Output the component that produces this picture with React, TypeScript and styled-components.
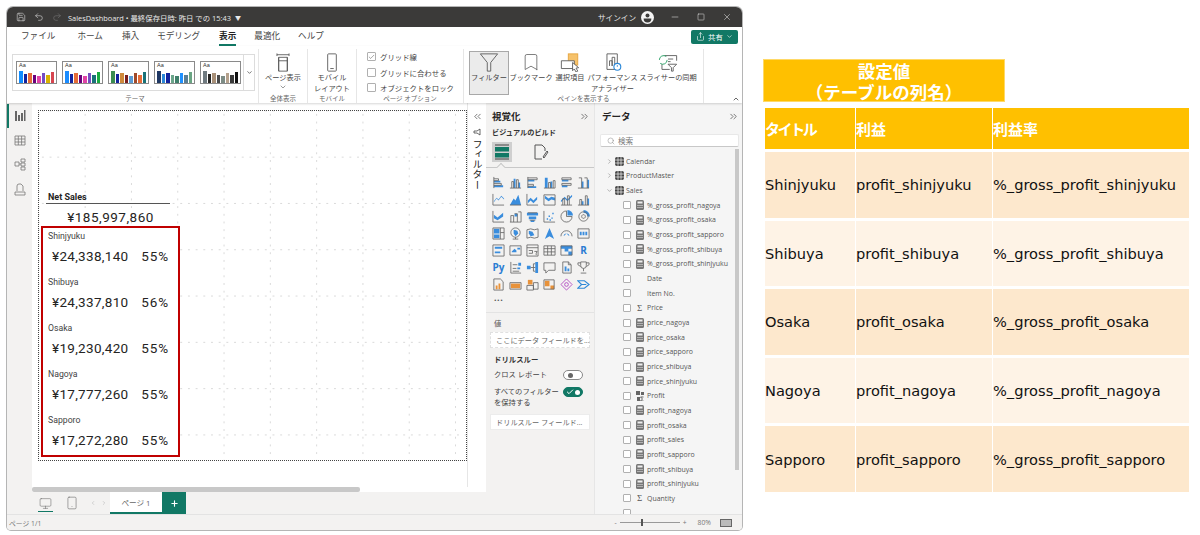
import React from 'react'
import styled, { createGlobalStyle } from 'styled-components'
import {
  Save,
  Undo2,
  Redo2,
  Minus,
  Square,
  X,
  ChevronDown,
  ChevronRight,
  ChevronUp,
  ChevronLeft,
  ChevronsLeft,
  ChevronsRight,
  Search,
  Monitor,
  Smartphone,
  Plus,
  Bookmark,
  Check,
  Share
} from 'lucide-react'

const UI_FONT = `'Open Sans', 'Noto Sans CJK JP', sans-serif`
const GREEN = '#117865'

const GlobalStyle = createGlobalStyle`
  html, body { margin: 0; padding: 0; background: #fff; }
  #root { width: 1200px; height: 535px; overflow: hidden; }
`

const Page = styled.div`
  display: flex;
  width: 1200px;
  height: 535px;
  font-family: ${UI_FONT};
  color: #333;
`

const Window = styled.div`
  width: 735px;
  height: 523px;
  margin: 7px 0 0 7px;
  display: flex;
  flex-direction: column;
  border-radius: 6px 6px 4px 4px;
  box-shadow: 0 0 0 1px #b5b5b5;
  overflow: hidden;
  background: #fff;
`

const TitleBar = styled.div`
  height: 20px;
  flex: none;
  background: #3b3a39;
  display: flex;
  align-items: center;
  padding: 0 9px;
  color: #e8e8e8;
  font-size: 7.4px;
`

const TitleIcons = styled.div`
  display: flex;
  align-items: center;
  gap: 8px;
  margin-right: 6px;
`

const TitleText = styled.span`
  white-space: nowrap;
`

const TitleCaret = styled.span`
  margin-left: 4px;
  font-size: 6px;
`

const SignIn = styled.div`
  margin-left: auto;
  display: flex;
  align-items: center;
  gap: 5px;
  font-size: 7.6px;
`

const Avatar = styled.svg`
  width: 13px;
  height: 13px;
`

const WinButtons = styled.div`
  display: flex;
  align-items: center;
  gap: 17px;
  margin: 0 1px 0 16px;
`

const TabRow = styled.div`
  height: 19px;
  flex: none;
  display: flex;
  align-items: center;
  padding: 0 4px 0 14px;
  background: #fff;
`

const Tab = styled.div<{ $active?: boolean; $gap: number }>`
  position: relative;
  margin-right: ${(p) => p.$gap}px;
  font-size: 8.6px;
  font-weight: ${(p) => (p.$active ? 700 : 400)};
  color: ${(p) => (p.$active ? '#222' : '#444')};
  white-space: nowrap;
  line-height: 19px;

  ${(p) =>
    p.$active &&
    `&::after {
      content: '';
      position: absolute;
      left: 0;
      right: 0;
      bottom: 0;
      height: 2px;
      background: ${GREEN};
    }`}
`

const ShareButton = styled.div`
  margin-left: auto;
  width: 47px;
  height: 14px;
  border-radius: 2px;
  background: ${GREEN};
  color: #fff;
  font-size: 7.4px;
  display: flex;
  align-items: center;
  justify-content: center;
  gap: 3px;
`

const Ribbon = styled.div`
  height: 57px;
  flex: none;
  display: flex;
  background: #fff;
  padding-left: 5px;
  position: relative;
  box-shadow: 0 1px 2px rgba(0, 0, 0, 0.16);
  z-index: 2;
`

const RibbonGroup = styled.div<{ $w: number; $sep?: boolean }>`
  width: ${(p) => p.$w}px;
  flex: none;
  box-sizing: border-box;
  display: flex;
  flex-direction: column;
  border-right: ${(p) => (p.$sep === false ? 'none' : '1px solid #e6e6e6')};
  margin: 3px 0 0;
`

const GroupBody = styled.div`
  flex: 1;
  display: flex;
  min-height: 0;
`

const GroupLabel = styled.div`
  height: 9px;
  font-size: 6.5px;
  line-height: 9px;
  color: #666;
  text-align: center;
  white-space: nowrap;
`

const ThemeBox = styled.div`
  width: 243px;
  height: 37px;
  margin-top: 5px;
  border: 1px solid #dcdcdc;
  box-sizing: border-box;
  display: flex;
  align-items: center;
  padding-left: 3px;
`

const ThemeList = styled.div`
  display: flex;
  gap: 5px;
  flex: 1;
`

const Thumb = styled.div`
  width: 41px;
  height: 23px;
  box-sizing: border-box;
  border: 1px solid #8a8a8a;
  background: #fff;
  padding: 0 2px;
  display: flex;
  flex-direction: column;
`

const ThumbLabel = styled.div`
  font-family: 'Liberation Sans', sans-serif;
  font-size: 5.5px;
  line-height: 6px;
  color: #333;
`

const ThumbBars = styled.div`
  flex: 1;
  display: flex;
  align-items: flex-end;
  gap: 1px;
`

const ThumbBar = styled.div<{ $h: number; $c: string }>`
  flex: 1;
  height: ${(p) => p.$h}px;
  background: ${(p) => p.$c};
`

const ThemeMore = styled.div`
  width: 10px;
  height: 100%;
  border-left: 1px solid #dcdcdc;
  display: flex;
  align-items: center;
  justify-content: center;
  color: #444;
`

const LargeButtonRow = styled.div`
  display: flex;
  padding-left: 5px;
`

const LargeButton = styled.div<{ $w: number; $on?: boolean }>`
  width: ${(p) => p.$w}px;
  flex: none;
  box-sizing: border-box;
  margin-top: 2px;
  height: 44px;
  display: flex;
  flex-direction: column;
  align-items: center;
  font-size: 7.2px;
  line-height: 11px;
  color: #444;
  text-align: center;
  white-space: nowrap;
  background: ${(p) => (p.$on ? '#ebebeb' : 'transparent')};
  border: 1px solid ${(p) => (p.$on ? '#a8a8a8' : 'transparent')};
`

const LargeIcon = styled.svg`
  width: 22px;
  height: 19px;
  margin: 1px 0 0;
  flex: none;
`

const OptionList = styled.div`
  display: flex;
  flex-direction: column;
  gap: 3.5px;
  padding: 1.5px 0 0 10px;
`

const OptionRow = styled.div`
  display: flex;
  align-items: center;
  gap: 4px;
  height: 12px;
  font-size: 7.4px;
  white-space: nowrap;
  color: #444;
`

const Box = styled.div<{ $size?: number }>`
  width: ${(p) => p.$size ?? 9}px;
  height: ${(p) => p.$size ?? 9}px;
  flex: none;
  box-sizing: border-box;
  border: 1px solid #b0b0b0;
  border-radius: 1px;
  background: #fff;
  display: flex;
  align-items: center;
  justify-content: center;
`

const CollapseRibbon = styled.div`
  position: absolute;
  right: 2px;
  bottom: 0;
  color: #333;
  line-height: 0;
`

const Main = styled.div`
  flex: 1;
  min-height: 0;
  display: flex;
`

const LeftNav = styled.div`
  width: 25px;
  flex: none;
  background: #f3f2f1;
  display: flex;
  flex-direction: column;
  align-items: center;
  gap: 11.5px;
  padding-top: 6px;
  position: relative;

  &::before {
    content: '';
    position: absolute;
    left: 0;
    top: 1px;
    width: 2px;
    height: 24px;
    background: ${GREEN};
  }
`

const NavIcon = styled.svg`
  width: 12px;
  height: 13px;
`

const CanvasColumn = styled.div`
  width: 454px;
  flex: none;
  display: flex;
  flex-direction: column;
`

const CanvasRow = styled.div`
  flex: 1;
  min-height: 0;
  display: flex;
`

const CanvasArea = styled.div`
  width: 435px;
  flex: none;
  background: #fff;
  padding: 7px 0 0 6px;
  box-sizing: border-box;
  position: relative;
`

const ReportPage = styled.div`
  width: 429px;
  height: 351px;
  box-sizing: border-box;
  border: 1.5px dotted #444;
  display: flex;
  flex-direction: column;
  justify-content: flex-end;
  padding: 0 0 3px 2px;
  background-color: #fff;
  background-image: radial-gradient(circle, #d4d4d4 0.45px, transparent 0.7px),
    radial-gradient(circle, #d4d4d4 0.45px, transparent 0.7px);
  background-size: 46.3px 7.7px, 7.7px 46.3px;
  background-position: 23px 0, 0 23px;
`

const NetSales = styled.div`
  width: 124px;
  margin: 0 0 -1px 5px;
`

const NetTitle = styled.div`
  font-family: 'Roboto', sans-serif;
  font-weight: 700;
  font-size: 9px;
  line-height: 12px;
  padding-left: 2px;
  color: #252423;
  border-bottom: 1px solid #555;
`

const NetValue = styled.div`
  font-family: 'Roboto', sans-serif;
  font-size: 13.5px;
  letter-spacing: 0.5px;
  line-height: 20px;
  margin-top: 3px;
  padding-left: 5px;
  text-align: center;
  color: #252423;
`

const RedFrame = styled.div`
  width: 139px;
  height: 231px;
  box-sizing: border-box;
  border: 2px solid #c00000;
  padding: 2px 0 0 5px;
  display: flex;
  flex-direction: column;
  background: #fff;
`

const StoreCard = styled.div`
  height: 46px;
  flex: none;
`

const StoreName = styled.div`
  font-family: 'Roboto', sans-serif;
  font-size: 8.7px;
  line-height: 12px;
  color: #444;
`

const StoreValues = styled.div`
  display: flex;
  align-items: center;
  width: 117px;
  padding-left: 4px;
  margin-top: 6px;
  font-family: 'Roboto', sans-serif;
  font-size: 13.5px;
  letter-spacing: 0.3px;
  line-height: 17px;
  color: #252423;
`

const Percent = styled.span`
  margin-left: auto;
  letter-spacing: 0.9px;
`

const FilterPane = styled.div`
  width: 19px;
  flex: none;
  background: #fff;
  border-left: 1px solid #e6e6e6;
  box-sizing: border-box;
  display: flex;
  flex-direction: column;
  align-items: center;
  padding-top: 8px;
  color: #333;
`

const FilterFunnel = styled.svg`
  width: 8px;
  height: 8px;
  margin: 6px 0 3px;
`

const VerticalLabel = styled.div`
  writing-mode: vertical-rl;
  font-size: 10px;
  line-height: 12px;
  letter-spacing: 0.2px;
  color: #222;
`

const ScrollRow = styled.div`
  height: 5px;
  flex: none;
  background: #fff;
`

const ScrollThumb = styled.div`
  width: 328px;
  height: 5px;
  border-radius: 2px;
  background: #c8c8c8;
`

const PageTabs = styled.div`
  height: 22px;
  flex: none;
  background: #f3f2f1;
  display: flex;
  align-items: stretch;
`

const DeviceTab = styled.div<{ $active?: boolean; $w: number }>`
  width: ${(p) => p.$w}px;
  flex: none;
  display: flex;
  align-items: center;
  justify-content: center;
  position: relative;
  color: #666;

  ${(p) =>
    p.$active &&
    `&::after {
      content: '';
      position: absolute;
      left: 6px;
      right: 5px;
      bottom: 2px;
      height: 1.5px;
      background: ${GREEN};
    }`}
`

const PagerArrows = styled.div`
  width: 24px;
  display: flex;
  align-items: center;
  justify-content: center;
  gap: 5px;
  color: #bbb;
`

const PageTab = styled.div`
  width: 52px;
  box-sizing: border-box;
  background: #fff;
  border-bottom: 2px solid ${GREEN};
  font-size: 7.6px;
  color: #666;
  display: flex;
  align-items: center;
  justify-content: center;
`

const AddTab = styled.div`
  width: 24px;
  background: ${GREEN};
  color: #fff;
  display: flex;
  align-items: center;
  justify-content: center;
`

const VizPane = styled.div`
  width: 109px;
  flex: none;
  box-sizing: border-box;
  background: #f3f2f1;
  border-right: 1px solid #e6e6e6;
  display: flex;
  flex-direction: column;
  padding: 7px 4px 0 4px;
`

const PaneHeader = styled.div`
  display: flex;
  align-items: center;
  justify-content: space-between;
  height: 12px;
  padding-left: 2px;
  font-size: 9.5px;
  font-weight: 700;
  color: #252423;
`

const SubHeader = styled.div`
  font-size: 7.2px;
  font-weight: 700;
  line-height: 10px;
  margin: 5px 0 4px 2px;
  color: #333;
`

const BuildTabs = styled.div`
  display: flex;
  align-items: center;
  padding-left: 2px;
  gap: 19px;
  height: 21px;
`

const BuildTab = styled.div<{ $on?: boolean }>`
  width: 20px;
  height: 20px;
  display: flex;
  align-items: center;
  justify-content: center;
  background: ${(p) => (p.$on ? '#cfcfcf' : 'transparent')};
`

const BuildIcon = styled.svg`
  width: 16px;
  height: 16px;
`

const NotchRule = styled.div`
  height: 1px;
  background: #c8c8c8;
  margin: 5px -4px 0 -4px;
  position: relative;

  &::after {
    content: '';
    position: absolute;
    left: 12px;
    top: -3px;
    width: 5px;
    height: 5px;
    background: #f3f2f1;
    border-left: 1px solid #c8c8c8;
    border-top: 1px solid #c8c8c8;
    transform: rotate(45deg);
  }
`

const VizGrid = styled.div`
  display: grid;
  grid-template-columns: repeat(6, 17px);
  grid-auto-rows: 17px;
  margin: 6px 0 0 0;
  justify-items: center;
  align-items: center;
`

const VizGlyph = styled.svg`
  width: 13px;
  height: 13px;
`

const VizText = styled.span<{ $c: string; $s: number }>`
  font-family: 'Open Sans', sans-serif;
  font-weight: 700;
  font-size: ${(p) => p.$s}px;
  line-height: 13px;
  color: ${(p) => p.$c};
`

const MoreDots = styled.div`
  margin: 2px 0 0 4px;
  height: 13px;
  font-size: 9px;
  line-height: 9px;
  font-weight: 700;
  letter-spacing: 0.5px;
  color: #555;
`

const PaneRule = styled.div`
  height: 1px;
  background: #e3e3e3;
  margin: 4px -4px 0;
`

const FieldLabel = styled.div`
  font-size: 7.3px;
  line-height: 12px;
  margin: 4px 0 3px 4px;
  color: #555;
`

const WellBox = styled.div<{ $dashed?: boolean }>`
  height: 16px;
  box-sizing: border-box;
  background: #fff;
  border: 1px ${(p) => (p.$dashed ? 'dashed #e0e0e0' : 'solid #ececec')};
  font-size: 7.2px;
  line-height: 14px;
  padding-left: 5px;
  color: #666;
  white-space: nowrap;
  overflow: visible;
`

const DrillTitle = styled.div`
  font-size: 7.4px;
  font-weight: 700;
  line-height: 12px;
  margin: 5px 0 4px 4px;
  color: #333;
`

const ToggleRow = styled.div`
  display: flex;
  align-items: flex-start;
  justify-content: space-between;
  padding: 0 7px 0 4px;
  font-size: 7.3px;
  line-height: 11px;
  margin-bottom: 6px;
  color: #444;
`

const ToggleText = styled.div`
  width: 68px;
`

const Toggle = styled.div<{ $on?: boolean }>`
  width: 20px;
  height: 10px;
  margin-top: 1px;
  flex: none;
  box-sizing: border-box;
  border-radius: 5px;
  border: 1px solid ${(p) => (p.$on ? GREEN : '#888')};
  background: ${(p) => (p.$on ? GREEN : '#fff')};
  display: flex;
  align-items: center;
  justify-content: ${(p) => (p.$on ? 'flex-end' : 'flex-start')};
  padding: 0 2px;
  color: #fff;
  position: relative;
`

const Knob = styled.div<{ $on?: boolean }>`
  width: 5px;
  height: 5px;
  border-radius: 50%;
  background: ${(p) => (p.$on ? '#fff' : '#666')};
  margin-left: ${(p) => (p.$on ? 0 : 2)}px;
`

const ToggleCheck = styled.div`
  position: absolute;
  left: 2px;
  top: 0;
  line-height: 0;
`

const DataPane = styled.div`
  flex: 1;
  min-width: 0;
  background: #f5f5f5;
  display: flex;
  flex-direction: column;
  padding: 7px 3px 0 5px;
  position: relative;
  overflow: hidden;
`

const SearchBox = styled.div`
  height: 14px;
  width: 139px;
  margin-top: 12px;
  box-sizing: border-box;
  background: #fff;
  border: 1px solid #e8e8e8;
  border-bottom-color: #c8c8c8;
  border-radius: 2px;
  display: flex;
  align-items: center;
  gap: 3px;
  padding-left: 6px;
  font-size: 7.6px;
  color: #777;
`

const TreeList = styled.div`
  margin-top: 7px;
  display: flex;
  flex-direction: column;
`

const TreeRow = styled.div<{ $indent?: boolean }>`
  height: 14.67px;
  flex: none;
  display: flex;
  align-items: center;
  padding-left: ${(p) => (p.$indent ? 23 : 6)}px;
  font-size: 6.95px;
  color: #555;
  white-space: nowrap;
`

const TreeChevron = styled.div`
  width: 7px;
  margin-right: 1px;
  display: flex;
  color: #666;
`

const TreeTable = styled.svg`
  width: 9px;
  height: 9px;
  margin: 0 2px 0 1px;
  flex: none;
`

const FieldIconSlot = styled.div`
  width: 9px;
  height: 10px;
  margin: 0 3px 0 4px;
  flex: none;
  display: flex;
  align-items: center;
  justify-content: center;
  color: #555;
  font-size: 9px;
  font-family: 'Liberation Serif', serif;
`

const FieldIcon = styled.svg`
  width: 8px;
  height: 10px;
`

const DataScroll = styled.div`
  position: absolute;
  right: 3px;
  top: 46px;
  width: 4px;
  height: 321px;
  background: #c8c8c8;
`

const StatusBar = styled.div`
  height: 16px;
  flex: none;
  box-sizing: border-box;
  background: #f3f2f1;
  border-top: 1px solid #e3e3e3;
  display: flex;
  align-items: center;
  padding: 0 10px 0 2px;
  font-size: 6.8px;
  color: #777;
`

const ZoomSlider = styled.div`
  margin-left: auto;
  display: flex;
  align-items: center;
  gap: 3px;
`

const ZoomTrack = styled.div`
  width: 60px;
  height: 1px;
  background: #999;
  position: relative;

  &::before {
    content: '';
    position: absolute;
    left: 21px;
    top: -3px;
    width: 2px;
    height: 7px;
    background: #555;
  }
`

const ZoomValue = styled.span`
  margin: 0 9px 0 11px;
`

const FitIcon = styled.div`
  width: 10px;
  height: 6px;
  border: 1px solid #666;
  background: #bbb;
`

const SidePanel = styled.div`
  margin: 59px 0 0 21px;
  width: 426px;
  display: flex;
  flex-direction: column;
  align-items: flex-start;
`

const SettingTitle = styled.div`
  width: 242px;
  height: 43px;
  box-sizing: border-box;
  background: #ffc000;
  border: 1px solid #ffd966;
  color: #fff;
  font-family: 'Noto Sans CJK JP', sans-serif;
  font-weight: 700;
  font-size: 17.5px;
  line-height: 21px;
  text-align: center;
  white-space: nowrap;
`

const ConfigTable = styled.div`
  margin: 6px 0 0 2px;
  width: 424px;
  display: grid;
  grid-template-columns: 90px 136px 196px;
  grid-template-rows: 41px repeat(5, 65.6px);
  column-gap: 1px;
  row-gap: 3px;
`

const HeadCell = styled.div<{ $tight?: boolean }>`
  background: #ffc000;
  color: #fff;
  font-family: 'Noto Sans CJK JP', sans-serif;
  font-weight: 700;
  font-size: 15px;
  letter-spacing: ${(p) => (p.$tight ? '-2.4px' : '0')};
  display: flex;
  align-items: center;
`

const BodyCell = styled.div<{ $alt: boolean }>`
  background: ${(p) => (p.$alt ? '#fef3e6' : '#fde8cd')};
  color: #111;
  font-family: 'DejaVu Sans', sans-serif;
  font-size: 14.6px;
  display: flex;
  align-items: center;
  white-space: nowrap;
`

const THEMES = [
  ['#118dff', '#12239e', '#e66c37', '#6b007b', '#e044a7', '#744ec2', '#d9b300', '#d64550'],
  ['#1a8cff', '#12239e', '#e66c37', '#6b007b', '#e044a7', '#744ec2', '#197278', '#1aab40'],
  ['#3a8c50', '#12239e', '#d08a3c', '#7a1f1f', '#5b9bd5', '#a14a2a', '#e66c37', '#197278'],
  ['#1f3864', '#2b88d8', '#12239e', '#6ba58a', '#3f7f6a', '#1e90ff', '#5b7f95', '#6aa583'],
  ['#6f7a80', '#252423', '#a89078', '#4a4a4a', '#7d8c85', '#b5a18c', '#3a3a3a', '#111111']
]
const BAR_HEIGHTS = [12, 9, 10, 8, 7, 10, 8, 11]

const VIZ_ICONS: { g: string; b: string }[] = [
  { g: 'M2 1v12M2 3h5v2H2M2 8h8v2H2', b: 'M2 5h7v2H2zM2 10h10v2H2z' },
  { g: 'M1 13h12M3 13V6h2v7M8 13V4h2v9', b: 'M5 13V3h2v10zM10 13V7h2v6z' },
  { g: 'M2 1v12M2 2h10v2H2M2 9h6v2H2', b: 'M2 4h7v2H2zM2 11h9v2H2z' },
  { g: 'M1 13h12M6 13V7h2v6M11 13V5h2v8', b: 'M2 13V2h3v11zM8 13V6h2v7z' },
  { g: 'M2 2h10v2H2zM2 8h10v2H2z', b: 'M2 4h7v2H2zM2 10h6v2H2z' },
  { g: 'M1 13h12M2 2h3v11M8 2h3v11', b: 'M5 6h2v7H5zM11 4h2v9h-2z' },
  { g: 'M1 1v12h12', b: 'M2 9l3-4 2 2 3-4 3 3v1l-3-3-3 4-2-2-3 4z' },
  { g: 'M1 13h12', b: 'M1 13l4-7 2 2 3-6 3 11z' },
  { g: 'M1 1v12h12', b: 'M2 8l3-3 3 3 4-4v3l-4 4-3-3-3 3z' },
  { g: 'M1 2h12v11H1z', b: 'M2 3l4 3 3-2 4 1v3L9 7 6 9 2 6z' },
  { g: 'M1 13h12M3 13V6h2v7M8 13V3h2v10', b: 'M1 8l4-4 3 3 5-5v2L8 9 5 6 1 10z' },
  { g: 'M1 13h12M3 13V7h2v6M9 13V3h2v10', b: 'M5 13V9h2v4zM11 13V6h2v7z' },
  { g: 'M1 1v12h12', b: 'M2 5l4 3 6-5v4l-6 4-4-2z' },
  { g: 'M1 13h12M2 13V6h3v7M6 4h3v9M10 2h3v11', b: 'M6 4h3v3H6z' },
  { g: 'M2 3h10M4 11h6', b: 'M1 3h12v3H1zM3 7h8v3H3zM5 11h4v2H5z' },
  { g: 'M1 1v12h12', b: 'M4 9h1.5v1.5H4zM6 6h1.5v1.5H6zM9 8h1.5v1.5H9zM10 3h1.5v1.5H10zM7 10h1.5v1.5H7z' },
  { g: 'M7 1a6 6 0 1 0 6 6H7z', b: 'M8 0a6 6 0 0 1 6 6H8z' },
  { g: 'M7 2a5 5 0 1 0 .01 0M7 5a2 2 0 1 0 .01 0', b: 'M7 0a7 7 0 0 1 7 7h-3a4 4 0 0 0-4-4z' },
  { g: 'M1 1h12v12H1zM9 1v12M9 6h4', b: 'M2 2h6v5H2zM2 8h6v4H2z' },
  { g: 'M7 1a5 5 0 1 0 .01 0M4 13h6M7 11v2', b: 'M5 3l4 1 1 3-3 3-2-3z' },
  { g: 'M1 3l4-1 4 1 4-1v9l-4 1-4-1-4 1z', b: 'M3 4l4 1 2 4-4 1-2-3z' },
  { g: '', b: 'M7 1l5 12-5-3-5 3z' },
  { g: 'M1 10a6 6 0 0 1 12 0', b: 'M4 10a3 3 0 0 1 6 0l-3-3z' },
  { g: 'M1 2h12v10H1z', b: 'M3 5h2v4H3zM6 5h2v4H6zM9 5h2v4H9z' },
  { g: 'M1 1h12v12H1z', b: 'M3 3h8v2H3zM3 8h6v2H3z' },
  { g: 'M1 2h12v10H1z', b: 'M3 8l3-3 2 2v2H3zM9 4h3v2H9z' },
  { g: 'M1 1h12v12H1zM1 4h12M3 7h4v3H3M9 8l3 0-1 2v2', b: '' },
  { g: 'M1 2h12v10H1zM1 5h12M1 8.5h12M5 2v10M9 2v10', b: '' },
  { g: 'M1 2h12v10H1z', b: 'M1 2h12v3H1zM5 5h4v3H5zM9 8h4v4H9z' },
  { g: '', b: '' },
  { g: '', b: '' },
  { g: 'M2 1v12h11M4 4h5M4 8h4M4 11h7', b: 'M10 2h3v3h-3zM9 7h3v2H9z' },
  { g: 'M5 7h3M8 3v8M8 3h2M8 7h2M8 11h2', b: 'M1 5h4v4H1zM10 1h3v4h-3zM10 5h3v4h-3zM10 9h3v4h-3z' },
  { g: 'M1 2h12v8H6l-3 3v-3H1z', b: '' },
  { g: 'M3 1h6l3 3v9H3zM9 1v3h3', b: 'M5 6h2v5H5zM8 8h2v3H8z' },
  { g: 'M4 1h6v4a3 3 0 0 1-6 0zM4 2H1v2l3 2M10 2h3v2l-3 2M7 8v3M4 13h6', b: '' },
  { g: 'M2 1h7l3 3v9H2z', b: 'M4 8h2v4H4zM7 6h2v6H7z' },
  { g: 'M1 5h12v7H1z', b: 'M2 6h10v5H2z' },
  { g: 'M1 8h7v5H1zM8 5h5v7H8z', b: 'M2 2h5v5H2z' },
  { g: 'M1 2h11v10H1z', b: 'M2 3h5v6H2zM8 8h4v4H8z' },
  { g: '', b: '' },
  { g: '', b: '' }
]

const TABS: [string, number, boolean?][] = [
  ['ファイル', 22],
  ['ホーム', 19],
  ['挿入', 18],
  ['モデリング', 19],
  ['表示', 18, true],
  ['最適化', 18],
  ['ヘルプ', 0]
]

const STORES = [
  { name: 'Shinjyuku', amount: '¥24,338,140', rate: '55%' },
  { name: 'Shibuya', amount: '¥24,337,810', rate: '56%' },
  { name: 'Osaka', amount: '¥19,230,420', rate: '55%' },
  { name: 'Nagoya', amount: '¥17,777,260', rate: '55%' },
  { name: 'Sapporo', amount: '¥17,272,280', rate: '55%' }
]

type FieldKind = 'calc' | 'none' | 'sum' | 'kpi'

const FIELDS: [string, FieldKind][] = [
  ['%_gross_profit_nagoya', 'calc'],
  ['%_gross_profit_osaka', 'calc'],
  ['%_gross_profit_sapporo', 'calc'],
  ['%_gross_profit_shibuya', 'calc'],
  ['%_gross_profit_shinjyuku', 'calc'],
  ['Date', 'none'],
  ['Item No.', 'none'],
  ['Price', 'sum'],
  ['price_nagoya', 'calc'],
  ['price_osaka', 'calc'],
  ['price_sapporo', 'calc'],
  ['price_shibuya', 'calc'],
  ['price_shinjyuku', 'calc'],
  ['Profit', 'kpi'],
  ['profit_nagoya', 'calc'],
  ['profit_osaka', 'calc'],
  ['profit_sales', 'calc'],
  ['profit_sapporo', 'calc'],
  ['profit_shibuya', 'calc'],
  ['profit_shinjyuku', 'calc'],
  ['Quantity', 'sum']
]

const CONFIG_ROWS = [
  ['Shinjyuku', 'profit_shinjyuku', '%_gross_profit_shinjyuku'],
  ['Shibuya', 'profit_shibuya', '%_gross_profit_shibuya'],
  ['Osaka', 'profit_osaka', '%_gross_profit_osaka'],
  ['Nagoya', 'profit_nagoya', '%_gross_profit_nagoya'],
  ['Sapporo', 'profit_sapporo', '%_gross_profit_sapporo']
]

const Calc = () => (
  <FieldIcon viewBox="0 0 8 10">
    <rect x="0" y="0" width="8" height="10" rx="1.5" fill="#777" />
    <rect x="1.5" y="1.5" width="5" height="2" fill="#eee" />
    <path d="M1.5 5h1v1h-1zM3.5 5h1v1h-1zM5.5 5h1v1h-1zM1.5 7h1v1h-1zM3.5 7h1v1h-1zM5.5 7h1v1h-1z" fill="#eee" />
  </FieldIcon>
)

const TableGlyph = () => (
  <TreeTable viewBox="0 0 9 9">
    <rect width="9" height="9" rx="2" fill="#444" />
    <path d="M3 0v9M6 0v9M0 3h9M0 6h9" stroke="#f5f5f5" strokeWidth="0.7" />
  </TreeTable>
)

const FieldMark = ({ kind }: { kind: FieldKind }) => {
  if (kind === 'calc') return <Calc />
  if (kind === 'sum') return <>Σ</>
  if (kind === 'kpi')
    return (
      <FieldIcon viewBox="0 0 8 10">
        <path d="M0 0h4v4H0zM5 1h3v3H5zM1 6h3v4H1z" fill="#666" />
        <path d="M4.5 6h3M4.5 6l2 2-2 2h3" stroke="#444" strokeWidth="0.8" fill="none" />
      </FieldIcon>
    )
  return null
}

export default function App() {
  return (
    <Page>
      <GlobalStyle />
      <Window>
        <TitleBar>
          <TitleIcons>
            <Save size={10} strokeWidth={1.4} color="#ddd" />
            <Undo2 size={10} strokeWidth={1.4} color="#ddd" />
            <Redo2 size={10} strokeWidth={1.4} color="#777" />
          </TitleIcons>
          <TitleText>SalesDashboard • 最終保存日時: 昨日 での 15:43</TitleText>
          <TitleCaret>▼</TitleCaret>
          <SignIn>
            サインイン
            <Avatar viewBox="0 0 13 13">
              <circle cx="6.5" cy="6.5" r="6.5" fill="#f4f4f4" />
              <circle cx="6.5" cy="4.4" r="2" fill="#3b3a39" />
              <path d="M2.6 7.5h7.8a3.9 3.9 0 0 1-7.8 0z" fill="#3b3a39" />
            </Avatar>
          </SignIn>
          <WinButtons>
            <Minus size={10} strokeWidth={1.3} />
            <Square size={8} strokeWidth={1.5} />
            <X size={10} strokeWidth={1.3} />
          </WinButtons>
        </TitleBar>

        <TabRow>
          {TABS.map(([label, gap, active]) => (
            <Tab key={label} $gap={gap} $active={active}>
              {label}
            </Tab>
          ))}
          <ShareButton>
            <Share size={9} strokeWidth={1.6} />
            共有
            <ChevronDown size={7} strokeWidth={2} />
          </ShareButton>
        </TabRow>

        <Ribbon>
          <RibbonGroup $w={247}>
            <GroupBody>
              <ThemeBox>
                <ThemeList>
                  {THEMES.map((colors, i) => (
                    <Thumb key={i}>
                      <ThumbLabel>Aa</ThumbLabel>
                      <ThumbBars>
                        {colors.map((c, j) => (
                          <ThumbBar key={j} $c={c} $h={BAR_HEIGHTS[j]} />
                        ))}
                      </ThumbBars>
                    </Thumb>
                  ))}
                </ThemeList>
                <ThemeMore>
                  <ChevronDown size={7} strokeWidth={2.4} />
                </ThemeMore>
              </ThemeBox>
            </GroupBody>
            <GroupLabel>テーマ</GroupLabel>
          </RibbonGroup>

          <RibbonGroup $w={49}>
            <GroupBody>
              <LargeButton $w={48}>
                <LargeIcon viewBox="0 0 24 22" fill="none" stroke="#555" strokeWidth="1">
                  <path d="M5 2h14M5 0.5v3M19 0.5v3M7 5v16M17 5v16M7 5h10v16H7zM7 9h10" />
                </LargeIcon>
                ページ表示
                <ChevronDown size={8} strokeWidth={1.6} />
              </LargeButton>
            </GroupBody>
            <GroupLabel>全体表示</GroupLabel>
          </RibbonGroup>

          <RibbonGroup $w={49}>
            <GroupBody>
              <LargeButton $w={48}>
                <LargeIcon viewBox="0 0 24 22" fill="none" stroke="#555" strokeWidth="1">
                  <rect x="7" y="1" width="10" height="20" rx="1" />
                  <path d="M10 18h4" />
                </LargeIcon>
                モバイル
                <br />
                レイアウト
              </LargeButton>
            </GroupBody>
            <GroupLabel>モバイル</GroupLabel>
          </RibbonGroup>

          <RibbonGroup $w={107}>
            <GroupBody>
              <OptionList>
                <OptionRow>
                  <Box>
                    <Check size={8} strokeWidth={1.6} color="#444" />
                  </Box>
                  グリッド線
                </OptionRow>
                <OptionRow>
                  <Box />
                  グリッドに合わせる
                </OptionRow>
                <OptionRow>
                  <Box />
                  オブジェクトをロック
                </OptionRow>
              </OptionList>
            </GroupBody>
            <GroupLabel>ページ オプション</GroupLabel>
          </RibbonGroup>

          <RibbonGroup $w={240}>
            <GroupBody>
              <LargeButtonRow>
                <LargeButton $w={40} $on>
                  <LargeIcon viewBox="0 0 24 22" fill="none" stroke="#555" strokeWidth="1">
                    <path d="M2 1h20l-8 10v10h-4V11z" />
                  </LargeIcon>
                  フィルター
                </LargeButton>
                <LargeButton $w={44}>
                  <Bookmark size={20} strokeWidth={0.9} color="#555" />
                  ブックマーク
                </LargeButton>
                <LargeButton $w={34}>
                  <LargeIcon viewBox="0 0 24 22" fill="none" stroke="#555" strokeWidth="1">
                    <rect x="10" y="1" width="11" height="13" fill="#f6c26b" stroke="#e5a23a" />
                    <path d="M2 9h15v9H2z" fill="#fff" />
                    <path d="M15 11l7 6-3 .5 2 3.5-2 1-2-3.5-2 2z" fill="#fff" />
                  </LargeIcon>
                  選択項目
                </LargeButton>
                <LargeButton $w={51}>
                  <LargeIcon viewBox="0 0 24 22" fill="none" stroke="#555" strokeWidth="1">
                    <path d="M5 1h12v18H5zM8 15V9h3v6M11 15V5h3v10" />
                    <circle cx="17" cy="16" r="4" fill="#fff" stroke="#2b88d8" strokeWidth="1.3" />
                    <path d="M17 14v2" stroke="#2b88d8" />
                  </LargeIcon>
                  パフォーマンス
                  <br />
                  アナライザー
                </LargeButton>
                <LargeButton $w={60}>
                  <LargeIcon viewBox="0 0 24 22" fill="none" stroke="#555" strokeWidth="1">
                    <path d="M8 3h14v6M5 13v6h9M12 7h6M12 10h3" />
                    <path d="M2 8a5 5 0 0 1 8-4M11 8a5 5 0 0 1-8 4" stroke="#1a9a5a" />
                    <path d="M12 13h10l-4 4v4h-2v-4z" fill="#fff" />
                  </LargeIcon>
                  スライサーの同期
                </LargeButton>
              </LargeButtonRow>
            </GroupBody>
            <GroupLabel>ペインを表示する</GroupLabel>
          </RibbonGroup>
          <CollapseRibbon>
            <ChevronUp size={8} strokeWidth={2.2} />
          </CollapseRibbon>
        </Ribbon>

        <Main>
          <LeftNav>
            <NavIcon viewBox="0 0 12 13" fill="#666">
              <path d="M1 2h2v10H1zM4 6h2v6H4zM7 4h2v8H7zM10 1h1.5v11H10z" />
            </NavIcon>
            <NavIcon viewBox="0 0 12 13" fill="none" stroke="#777" strokeWidth="0.8">
              <path d="M1 2h10v9H1zM1 5h10M1 8h10M4.3 2v9M7.6 2v9" />
            </NavIcon>
            <NavIcon viewBox="0 0 12 13" fill="none" stroke="#777" strokeWidth="0.8">
              <path d="M1 4h4v4H1zM7 1h4v3H7zM7 5h4v3H7zM7 9h4v3H7zM5 6h2" />
            </NavIcon>
            <NavIcon viewBox="0 0 12 13" fill="none" stroke="#777" strokeWidth="0.8">
              <path d="M3 8V3a2 2 0 0 1 2-2h2l2 2v5M1 9h10v3H1z" />
            </NavIcon>
          </LeftNav>

          <CanvasColumn>
            <CanvasRow>
              <CanvasArea>
                <ReportPage>
                  <NetSales>
                    <NetTitle>Net Sales</NetTitle>
                    <NetValue>¥185,997,860</NetValue>
                  </NetSales>
                  <RedFrame>
                    {STORES.map((s) => (
                      <StoreCard key={s.name}>
                        <StoreName>{s.name}</StoreName>
                        <StoreValues>
                          {s.amount}
                          <Percent>{s.rate}</Percent>
                        </StoreValues>
                      </StoreCard>
                    ))}
                  </RedFrame>
                </ReportPage>
              </CanvasArea>
              <FilterPane>
                <ChevronsLeft size={11} strokeWidth={1.4} />
                <FilterFunnel viewBox="0 0 8 8" fill="none" stroke="#444" strokeWidth="0.8">
                  <path d="M7 1v6L4 5H1V3h3z" />
                </FilterFunnel>
                <VerticalLabel>フィルター</VerticalLabel>
              </FilterPane>
            </CanvasRow>
            <ScrollRow>
              <ScrollThumb />
            </ScrollRow>
            <PageTabs>
              <DeviceTab $w={26} $active>
                <Monitor size={13} strokeWidth={1} />
              </DeviceTab>
              <DeviceTab $w={28}>
                <Smartphone size={14} strokeWidth={1} />
              </DeviceTab>
              <PagerArrows>
                <ChevronLeft size={6} strokeWidth={2.5} />
                <ChevronRight size={6} strokeWidth={2.5} />
              </PagerArrows>
              <PageTab>ページ 1</PageTab>
              <AddTab>
                <Plus size={9} strokeWidth={3} />
              </AddTab>
            </PageTabs>
          </CanvasColumn>

          <VizPane>
            <PaneHeader>
              視覚化
              <ChevronsRight size={11} strokeWidth={1.4} color="#333" />
            </PaneHeader>
            <SubHeader>ビジュアルのビルド</SubHeader>
            <BuildTabs>
              <BuildTab $on>
                <BuildIcon viewBox="0 0 16 16">
                  <path d="M1 1h14M1 15h14" stroke="#444" strokeWidth="1" />
                  <rect x="1" y="3" width="14" height="4.5" fill={GREEN} />
                  <rect x="1" y="9" width="14" height="4.5" fill={GREEN} />
                </BuildIcon>
              </BuildTab>
              <BuildTab>
                <BuildIcon viewBox="0 0 16 16" fill="none" stroke="#555" strokeWidth="1">
                  <path d="M2 1h7l3 3v3M2 1v14h7M11 14l4-6-1-1-4 6z" />
                </BuildIcon>
              </BuildTab>
            </BuildTabs>
            <NotchRule />
            <VizGrid>
              {VIZ_ICONS.map((icon, i) => {
                if (i === 29)
                  return (
                    <VizText key={i} $c="#2b7cd3" $s={10}>
                      R
                    </VizText>
                  )
                if (i === 30)
                  return (
                    <VizText key={i} $c="#2b7cd3" $s={10}>
                      Py
                    </VizText>
                  )
                if (i === 40)
                  return (
                    <VizGlyph key={i} viewBox="0 0 14 14" fill="none" stroke="#b44fc4" strokeWidth="1">
                      <path d="M7 1l6 6-6 6-6-6z" />
                      <circle cx="7" cy="7" r="2" />
                    </VizGlyph>
                  )
                if (i === 41)
                  return (
                    <VizGlyph key={i} viewBox="0 0 14 14" fill="none" stroke="#2b88d8" strokeWidth="1.2">
                      <path d="M1 3h7l5 4-5 4H1l4-4zM4 7h6" />
                    </VizGlyph>
                  )
                return (
                  <VizGlyph key={i} viewBox="0 0 14 14">
                    <path d={icon.b} fill={i >= 36 && i <= 39 ? '#e8923a' : '#3a8ddd'} />
                    <path d={icon.g} fill="none" stroke="#666" strokeWidth="0.9" />
                  </VizGlyph>
                )
              })}
            </VizGrid>
            <MoreDots>···</MoreDots>
            <PaneRule />
            <FieldLabel>値</FieldLabel>
            <WellBox $dashed>ここにデータ フィールドを...</WellBox>
            <DrillTitle>ドリルスルー</DrillTitle>
            <ToggleRow>
              <ToggleText>クロス レポート</ToggleText>
              <Toggle>
                <Knob />
              </Toggle>
            </ToggleRow>
            <ToggleRow>
              <ToggleText>すべてのフィルターを保持する</ToggleText>
              <Toggle $on>
                <ToggleCheck>
                  <Check size={8} strokeWidth={3} />
                </ToggleCheck>
                <Knob $on />
              </Toggle>
            </ToggleRow>
            <WellBox>ドリルスルー フィールド...</WellBox>
          </VizPane>

          <DataPane>
            <PaneHeader>
              データ
              <ChevronsRight size={11} strokeWidth={1.4} color="#333" />
            </PaneHeader>
            <SearchBox>
              <Search size={8} strokeWidth={1.3} />
              検索
            </SearchBox>
            <TreeList>
              <TreeRow>
                <TreeChevron>
                  <ChevronRight size={7} strokeWidth={1.5} />
                </TreeChevron>
                <TableGlyph />
                Calendar
              </TreeRow>
              <TreeRow>
                <TreeChevron>
                  <ChevronRight size={7} strokeWidth={1.5} />
                </TreeChevron>
                <TableGlyph />
                ProductMaster
              </TreeRow>
              <TreeRow>
                <TreeChevron>
                  <ChevronDown size={7} strokeWidth={1.5} />
                </TreeChevron>
                <TableGlyph />
                Sales
              </TreeRow>
              {FIELDS.map(([name, kind]) => (
                <TreeRow key={name} $indent>
                  <Box $size={8} />
                  <FieldIconSlot>
                    <FieldMark kind={kind} />
                  </FieldIconSlot>
                  {name}
                </TreeRow>
              ))}
              <TreeRow $indent>
                <Box $size={8} />
              </TreeRow>
            </TreeList>
            <DataScroll />
          </DataPane>
        </Main>

        <StatusBar>
          ページ 1/1
          <ZoomSlider>
            -
            <ZoomTrack />+
          </ZoomSlider>
          <ZoomValue>80%</ZoomValue>
          <FitIcon />
        </StatusBar>
      </Window>

      <SidePanel>
        <SettingTitle>
          設定値
          <br />
          （テーブルの列名）
        </SettingTitle>
        <ConfigTable>
          <HeadCell $tight>タイトル</HeadCell>
          <HeadCell>利益</HeadCell>
          <HeadCell>利益率</HeadCell>
          {CONFIG_ROWS.map((row, i) =>
            row.map((cell) => (
              <BodyCell key={cell} $alt={i % 2 === 1}>
                {cell}
              </BodyCell>
            ))
          )}
        </ConfigTable>
      </SidePanel>
    </Page>
  )
}
